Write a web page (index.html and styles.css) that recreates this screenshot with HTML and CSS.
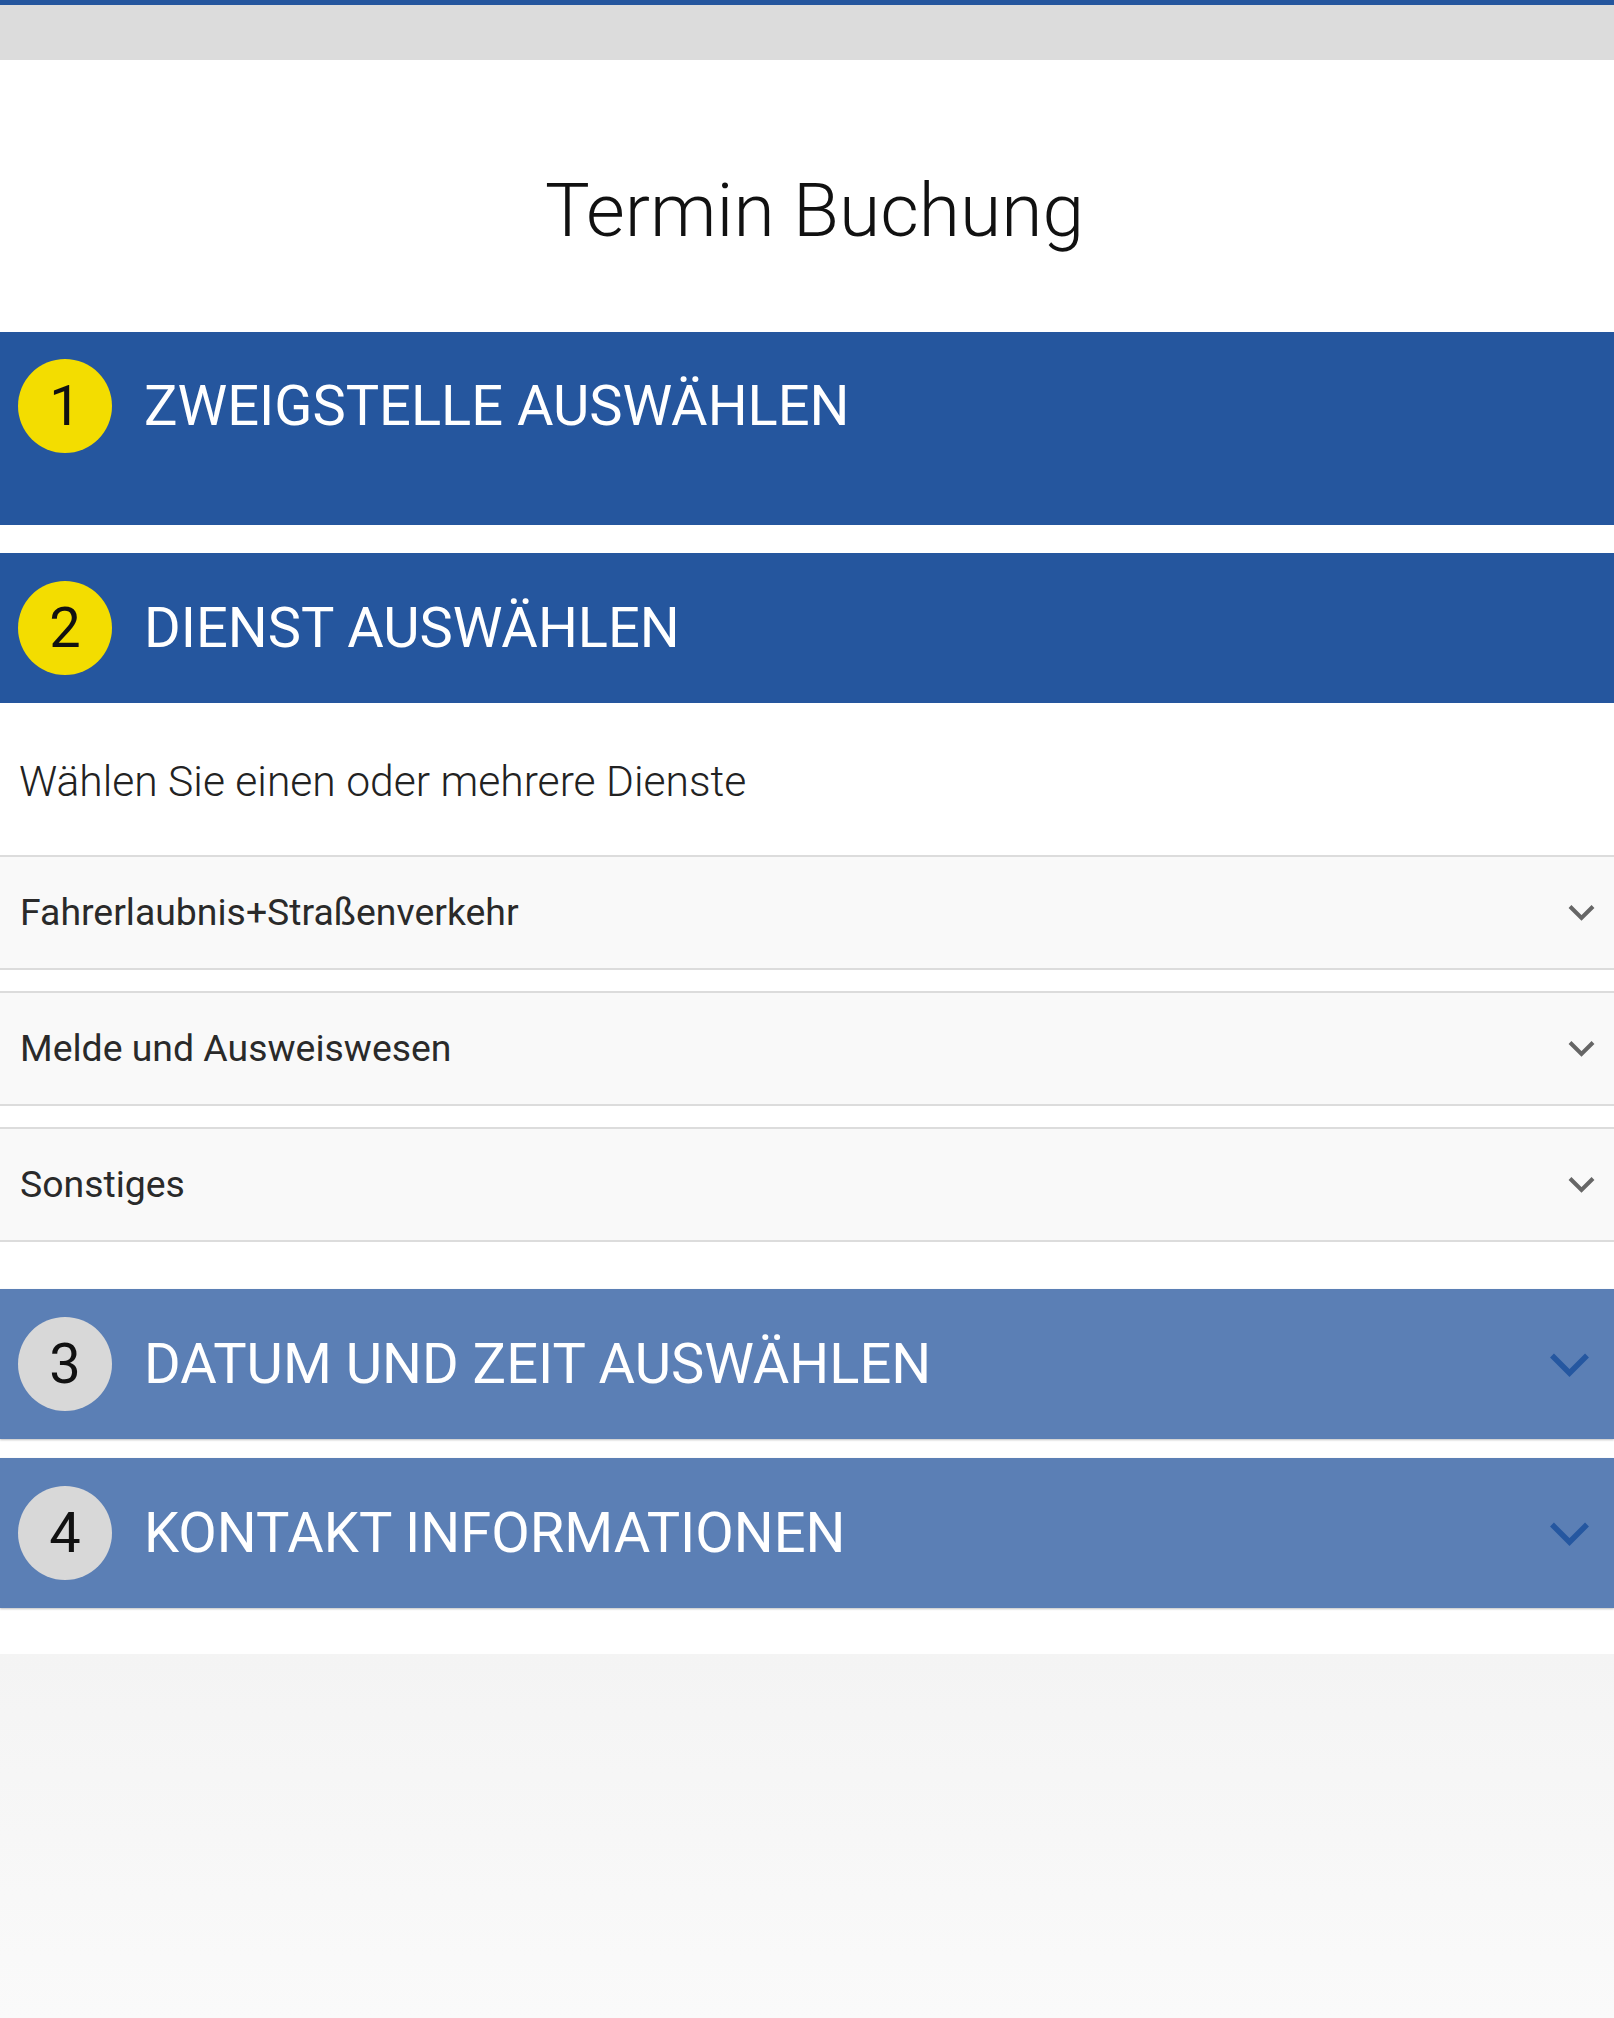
FILE: index.html
```html
<!DOCTYPE html>
<html lang="de">
<head>
    <meta charset="UTF-8">
    <meta name="viewport" content="width=device-width, initial-scale=1.0">
    <title>Termin Buchung</title>
    <link rel="stylesheet" href="styles.css">
</head>
<body>
    <div class="topbar"></div>
    <header class="page-head">
        <h1>Termin Buchung</h1>
    </header>

    <section class="step step-done">
        <div class="step-head">
            <span class="step-num">1</span>
            <span class="step-title">ZWEIGSTELLE AUSWÄHLEN</span>
        </div>
        <div class="step-spacer"></div>
    </section>

    <section class="step step-current">
        <div class="step-head">
            <span class="step-num">2</span>
            <span class="step-title">DIENST AUSWÄHLEN</span>
        </div>
    </section>
    <div class="step-body">
        <p class="hint">Wählen Sie einen oder mehrere Dienste</p>
        <div class="group">
            <span class="group-name">Fahrerlaubnis+Straßenverkehr</span>
            <svg class="chev" width="27" height="17" viewBox="0 0 27 17"><polyline points="2,2.5 13.5,14 25,2.5" fill="none" stroke="#666" stroke-width="4"/></svg>
        </div>
        <div class="group">
            <span class="group-name">Melde und Ausweiswesen</span>
            <svg class="chev" width="27" height="17" viewBox="0 0 27 17"><polyline points="2,2.5 13.5,14 25,2.5" fill="none" stroke="#666" stroke-width="4"/></svg>
        </div>
        <div class="group">
            <span class="group-name">Sonstiges</span>
            <svg class="chev" width="27" height="17" viewBox="0 0 27 17"><polyline points="2,2.5 13.5,14 25,2.5" fill="none" stroke="#666" stroke-width="4"/></svg>
        </div>
    </div>

    <section class="step step-later">
        <div class="step-head">
            <span class="step-num">3</span>
            <span class="step-title">DATUM UND ZEIT AUSWÄHLEN</span>
            <svg class="step-chev" width="41" height="25" viewBox="0 0 41 25"><polyline points="3,3.5 20.5,21 38,3.5" fill="none" stroke="#2557a0" stroke-width="5.5"/></svg>
        </div>
    </section>
    <section class="step step-later">
        <div class="step-head">
            <span class="step-num">4</span>
            <span class="step-title">KONTAKT INFORMATIONEN</span>
            <svg class="step-chev" width="41" height="25" viewBox="0 0 41 25"><polyline points="3,3.5 20.5,21 38,3.5" fill="none" stroke="#2557a0" stroke-width="5.5"/></svg>
        </div>
    </section>

    <div class="page-foot"></div>
</body>
</html>
```

FILE: styles.css
```css
body {
    margin: 0;
    background-color: white;
    font-family: Roboto, "Liberation Sans", sans-serif;
    color: #111;
}
.topbar {
    height: 55px;
    border-top: 5px solid #25569e;
    background-color: #dcdcdc;
}
.page-head {
    padding: 105px 0 77px 15px;
    text-align: center;
}
.page-head h1 {
    margin: 0;
    font-size: 75px;
    font-weight: 300;
    line-height: 90px;
    color: #111;
}
.step {
    margin-bottom: 28px;
}
.step-done, .step-current {
    background-color: #25569e;
}
.step-current {
    margin-bottom: 0;
}
.step-later {
    background-color: #5b7fb5;
    margin-bottom: 19px;
    box-shadow: 0 1px 2px rgba(0, 0, 0, 0.25);
}
.step-head {
    display: flex;
    align-items: center;
    padding: 28px 24px 28px 18px;
}
.step-done .step-head {
    padding-top: 27px;
}
.step-spacer {
    height: 44px;
}
.step-num {
    width: 94px;
    height: 94px;
    border-radius: 50%;
    display: flex;
    align-items: center;
    justify-content: center;
    font-size: 56px;
    line-height: 1;
    color: #111;
    flex-shrink: 0;
}
.step-done .step-num, .step-current .step-num {
    background-color: #f3dd00;
}
.step-later .step-num {
    background-color: #d8d8d8;
}
.step-title {
    margin-left: 32px;
    font-size: 56px;
    line-height: 1;
    color: white;
    flex: 1;
}
.step-chev {
    flex-shrink: 0;
}
.step-body {
    margin-bottom: 47px;
}
.hint {
    margin: 0;
    padding: 55px 19px 51px;
    font-size: 42.6px;
    font-weight: 300;
    line-height: 46px;
    color: #222;
}
.group {
    display: flex;
    align-items: center;
    justify-content: space-between;
    height: 111px;
    padding: 0 19px 0 20px;
    background-color: #f9f9f9;
    border-top: 2px solid #dcdcdc;
    border-bottom: 2px solid #dcdcdc;
    margin-bottom: 21px;
}
.group:last-child {
    margin-bottom: 0;
}
.group-name {
    font-size: 37.4px;
    line-height: 1;
    color: #2a2a2a;
}
.page-foot {
    margin-top: 46px;
    height: 364px;
    background: linear-gradient(#f4f4f4, #fafafa);
}
```
